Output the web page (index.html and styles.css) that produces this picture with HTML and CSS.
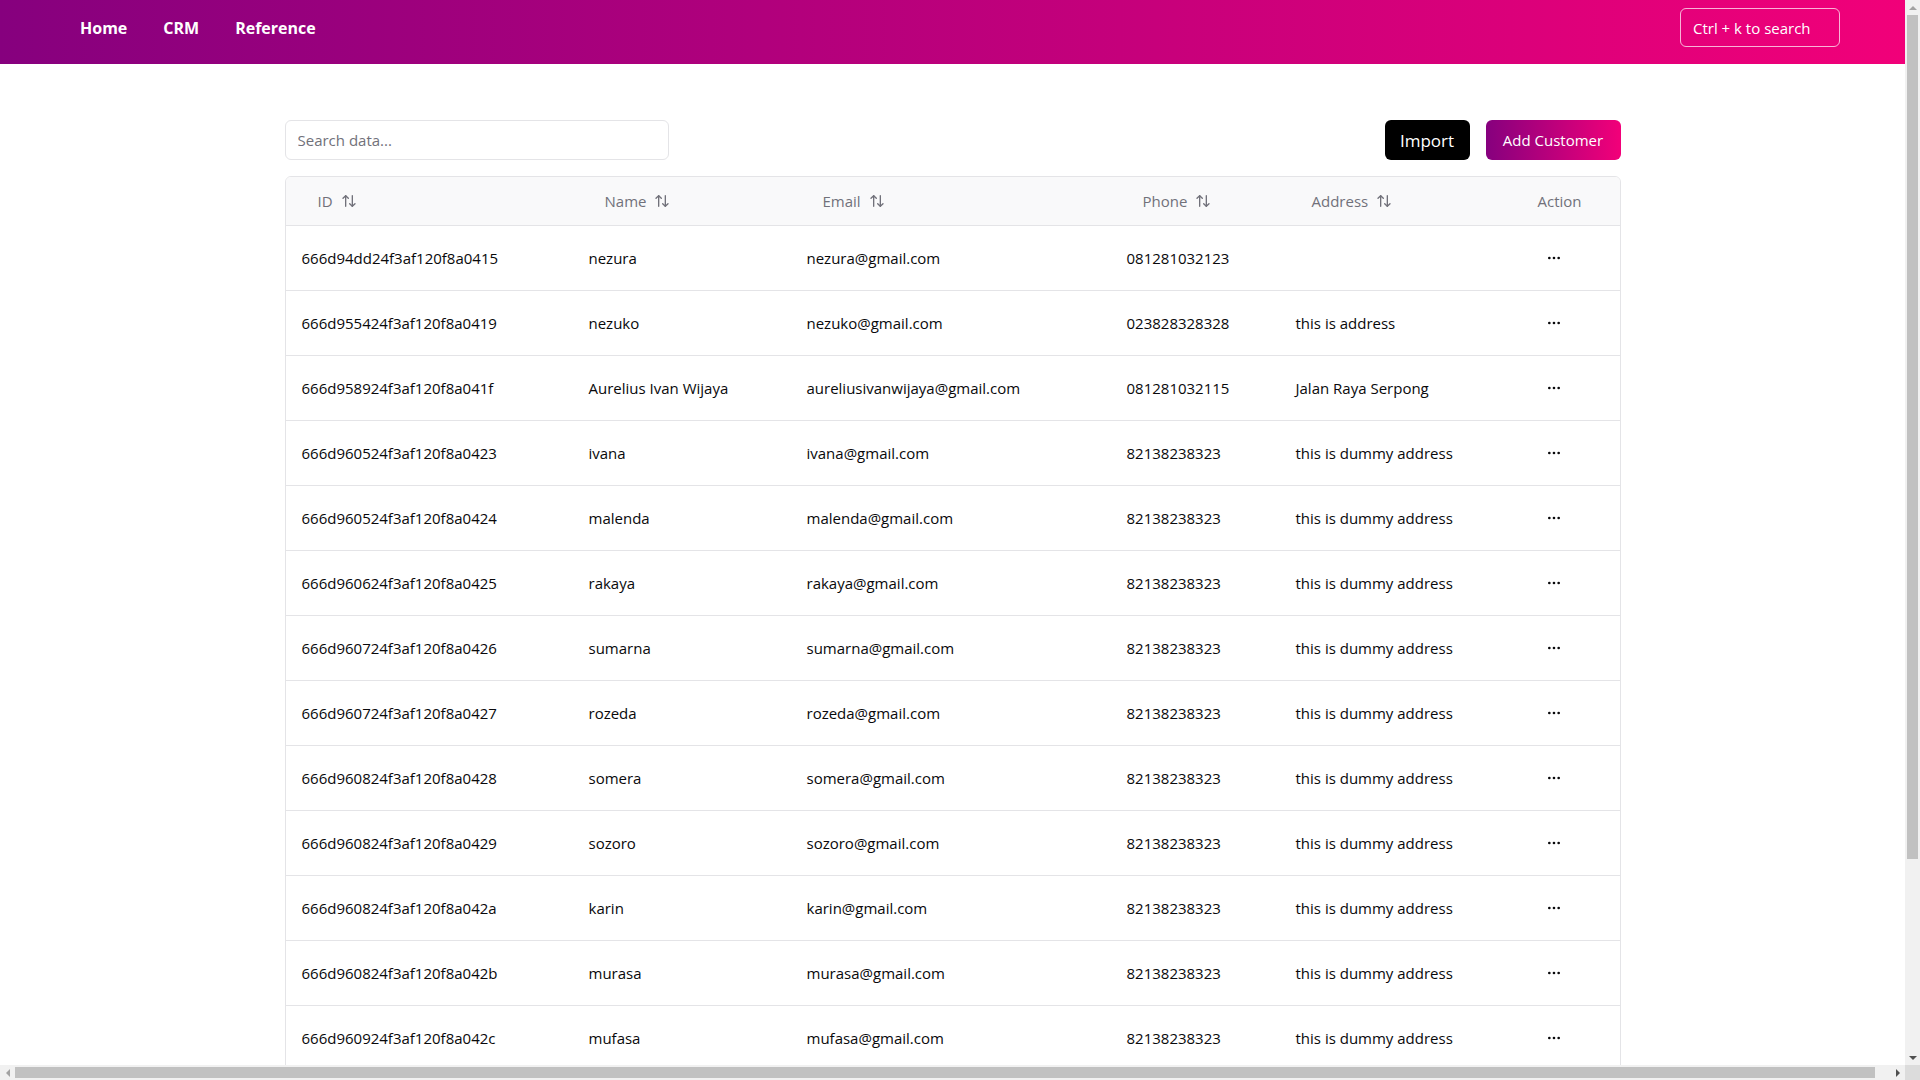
FILE: index.html
```html
<!DOCTYPE html>
<html lang="en">
<head>
<meta charset="utf-8">
<title>Customers</title>
<link rel="stylesheet" href="styles.css">
</head>
<body>
<div class="frame">
<div class="page">
<header class="topbar">
  <nav class="nav">
    <a class="nav-link" href="#">Home</a>
    <a class="nav-link" href="#">CRM</a>
    <a class="nav-link" href="#">Reference</a>
  </nav>
  <button class="cmd-search">Ctrl + k to search</button>
</header>
<main class="main">
  <div class="toolbar">
    <input class="search-input" type="text" placeholder="Search data...">
    <div class="actions">
      <button class="btn btn-dark">Import</button>
      <button class="btn btn-grad">Add Customer</button>
    </div>
  </div>
  <div class="table-wrap">
    <table class="table">
      <colgroup>
        <col class="c-id"><col class="c-name"><col class="c-email"><col class="c-phone"><col class="c-addr"><col class="c-act">
      </colgroup>
      <thead>
        <tr>
          <th><span class="sort-btn">ID <svg class="sort-ico" viewBox="0 0 24 24"><path d="m21 16-4 4-4-4"/><path d="M17 20V4"/><path d="m3 8 4-4 4 4"/><path d="M7 4v16"/></svg></span></th>
          <th><span class="sort-btn">Name <svg class="sort-ico" viewBox="0 0 24 24"><path d="m21 16-4 4-4-4"/><path d="M17 20V4"/><path d="m3 8 4-4 4 4"/><path d="M7 4v16"/></svg></span></th>
          <th><span class="sort-btn">Email <svg class="sort-ico" viewBox="0 0 24 24"><path d="m21 16-4 4-4-4"/><path d="M17 20V4"/><path d="m3 8 4-4 4 4"/><path d="M7 4v16"/></svg></span></th>
          <th><span class="sort-btn">Phone <svg class="sort-ico" viewBox="0 0 24 24"><path d="m21 16-4 4-4-4"/><path d="M17 20V4"/><path d="m3 8 4-4 4 4"/><path d="M7 4v16"/></svg></span></th>
          <th><span class="sort-btn">Address <svg class="sort-ico" viewBox="0 0 24 24"><path d="m21 16-4 4-4-4"/><path d="M17 20V4"/><path d="m3 8 4-4 4 4"/><path d="M7 4v16"/></svg></span></th>
          <th class="th-plain">Action</th>
        </tr>
      </thead>
      <tbody>
        <tr><td>666d94dd24f3af120f8a0415</td><td>nezura</td><td>nezura@gmail.com</td><td>081281032123</td><td></td><td><span class="dots"><svg viewBox="0 0 24 24"><circle cx="12" cy="12" r="1"/><circle cx="19" cy="12" r="1"/><circle cx="5" cy="12" r="1"/></svg></span></td></tr>
        <tr><td>666d955424f3af120f8a0419</td><td>nezuko</td><td>nezuko@gmail.com</td><td>023828328328</td><td>this is address</td><td><span class="dots"><svg viewBox="0 0 24 24"><circle cx="12" cy="12" r="1"/><circle cx="19" cy="12" r="1"/><circle cx="5" cy="12" r="1"/></svg></span></td></tr>
        <tr><td>666d958924f3af120f8a041f</td><td>Aurelius Ivan Wijaya</td><td>aureliusivanwijaya@gmail.com</td><td>081281032115</td><td>Jalan Raya Serpong</td><td><span class="dots"><svg viewBox="0 0 24 24"><circle cx="12" cy="12" r="1"/><circle cx="19" cy="12" r="1"/><circle cx="5" cy="12" r="1"/></svg></span></td></tr>
        <tr><td>666d960524f3af120f8a0423</td><td>ivana</td><td>ivana@gmail.com</td><td>82138238323</td><td>this is dummy address</td><td><span class="dots"><svg viewBox="0 0 24 24"><circle cx="12" cy="12" r="1"/><circle cx="19" cy="12" r="1"/><circle cx="5" cy="12" r="1"/></svg></span></td></tr>
        <tr><td>666d960524f3af120f8a0424</td><td>malenda</td><td>malenda@gmail.com</td><td>82138238323</td><td>this is dummy address</td><td><span class="dots"><svg viewBox="0 0 24 24"><circle cx="12" cy="12" r="1"/><circle cx="19" cy="12" r="1"/><circle cx="5" cy="12" r="1"/></svg></span></td></tr>
        <tr><td>666d960624f3af120f8a0425</td><td>rakaya</td><td>rakaya@gmail.com</td><td>82138238323</td><td>this is dummy address</td><td><span class="dots"><svg viewBox="0 0 24 24"><circle cx="12" cy="12" r="1"/><circle cx="19" cy="12" r="1"/><circle cx="5" cy="12" r="1"/></svg></span></td></tr>
        <tr><td>666d960724f3af120f8a0426</td><td>sumarna</td><td>sumarna@gmail.com</td><td>82138238323</td><td>this is dummy address</td><td><span class="dots"><svg viewBox="0 0 24 24"><circle cx="12" cy="12" r="1"/><circle cx="19" cy="12" r="1"/><circle cx="5" cy="12" r="1"/></svg></span></td></tr>
        <tr><td>666d960724f3af120f8a0427</td><td>rozeda</td><td>rozeda@gmail.com</td><td>82138238323</td><td>this is dummy address</td><td><span class="dots"><svg viewBox="0 0 24 24"><circle cx="12" cy="12" r="1"/><circle cx="19" cy="12" r="1"/><circle cx="5" cy="12" r="1"/></svg></span></td></tr>
        <tr><td>666d960824f3af120f8a0428</td><td>somera</td><td>somera@gmail.com</td><td>82138238323</td><td>this is dummy address</td><td><span class="dots"><svg viewBox="0 0 24 24"><circle cx="12" cy="12" r="1"/><circle cx="19" cy="12" r="1"/><circle cx="5" cy="12" r="1"/></svg></span></td></tr>
        <tr><td>666d960824f3af120f8a0429</td><td>sozoro</td><td>sozoro@gmail.com</td><td>82138238323</td><td>this is dummy address</td><td><span class="dots"><svg viewBox="0 0 24 24"><circle cx="12" cy="12" r="1"/><circle cx="19" cy="12" r="1"/><circle cx="5" cy="12" r="1"/></svg></span></td></tr>
        <tr><td>666d960824f3af120f8a042a</td><td>karin</td><td>karin@gmail.com</td><td>82138238323</td><td>this is dummy address</td><td><span class="dots"><svg viewBox="0 0 24 24"><circle cx="12" cy="12" r="1"/><circle cx="19" cy="12" r="1"/><circle cx="5" cy="12" r="1"/></svg></span></td></tr>
        <tr><td>666d960824f3af120f8a042b</td><td>murasa</td><td>murasa@gmail.com</td><td>82138238323</td><td>this is dummy address</td><td><span class="dots"><svg viewBox="0 0 24 24"><circle cx="12" cy="12" r="1"/><circle cx="19" cy="12" r="1"/><circle cx="5" cy="12" r="1"/></svg></span></td></tr>
        <tr><td>666d960924f3af120f8a042c</td><td>mufasa</td><td>mufasa@gmail.com</td><td>82138238323</td><td>this is dummy address</td><td><span class="dots"><svg viewBox="0 0 24 24"><circle cx="12" cy="12" r="1"/><circle cx="19" cy="12" r="1"/><circle cx="5" cy="12" r="1"/></svg></span></td></tr>
      </tbody>
    </table>
  </div>
</main>
</div>
<div class="vscroll">
  <span class="arrow arrow-up dim"></span>
  <span class="vthumb"></span>
  <span class="arrow arrow-down"></span>
</div>
<div class="hscroll">
  <span class="arrow arrow-left dim"></span>
  <span class="hthumb"></span>
  <span class="arrow arrow-right"></span>
</div>
<div class="corner"></div>
</div>
</body>
</html>
```

FILE: styles.css
```css
* { box-sizing: border-box; }
html, body { margin: 0; padding: 0; overflow: hidden; }
body {
  font-family: "Open Sans", "Liberation Sans", sans-serif;
  color: #09090b;
  background: #ffffff;
}
.frame {
  display: grid;
  grid-template-columns: 1905px 15px;
  grid-template-rows: 1065px 15px;
  width: 1920px;
  height: 1080px;
}
.page {
  overflow: hidden;
  background: #ffffff;
}
.topbar {
  width: 1920px;
  height: 64px;
  padding: 8px 80px 0;
  display: flex;
  align-items: flex-start;
  justify-content: space-between;
  background: linear-gradient(90deg, #86007e 0%, #f20079 100%);
}
.nav { display: flex; align-items: center; gap: 36px; height: 39px; }
.nav-link {
  color: #ffffff;
  text-decoration: none;
  font-weight: 700;
  font-size: 16px;
}
.cmd-search {
  width: 160px;
  height: 39px;
  border: 1px solid rgba(255,255,255,0.7);
  border-radius: 6px;
  background: transparent;
  color: #ffffff;
  font-family: inherit;
  font-size: 15px;
  text-align: left;
  padding: 0 12px;
}
.main {
  width: 1336px;
  margin: 0 auto;
  padding: 56px 0 40px;
}
.toolbar {
  display: flex;
  justify-content: space-between;
  align-items: center;
  margin-bottom: 16px;
}
.search-input {
  width: 384px;
  height: 40px;
  border: 1px solid #e4e4e7;
  border-radius: 6px;
  padding: 0 12px;
  font-family: inherit;
  font-size: 15px;
  color: #09090b;
  outline: none;
}
.search-input::placeholder { color: #71717a; }
.actions { display: flex; gap: 16px; }
.btn {
  height: 40px;
  border: none;
  border-radius: 6px;
  color: #ffffff;
  font-family: inherit;
  cursor: pointer;
}
.btn-dark { background: #000000; width: 85px; font-size: 17px; }
.btn-grad {
  width: 135px;
  font-size: 15px;
  font-weight: 500;
  background: linear-gradient(90deg, #86007e 0%, #f20079 100%);
}
.table-wrap {
  border: 1px solid #e4e4e7;
  border-radius: 6px;
  overflow: hidden;
}
.table {
  width: 100%;
  border-collapse: collapse;
  table-layout: fixed;
  font-size: 15px;
}
.c-id { width: 287px; }
.c-name { width: 218px; }
.c-email { width: 320px; }
.c-phone { width: 169px; }
.c-addr { width: 242px; }
.c-act { width: 98px; }
thead tr { background: #f9f9fa; }
th {
  height: 48px;
  padding: 0 16px;
  text-align: left;
  font-weight: 500;
  color: #71717a;
  border-bottom: 1px solid #e4e4e7;
}
.sort-btn {
  display: inline-flex;
  align-items: center;
  gap: 8px;
  padding: 0 16px;
}
.th-plain { padding-left: 16px; }
.sort-ico {
  width: 16px;
  height: 16px;
  fill: none;
  stroke: currentColor;
  stroke-width: 2;
  stroke-linecap: round;
  stroke-linejoin: round;
}
td {
  height: 65px;
  padding: 0 16px;
  border-bottom: 1px solid #e4e4e7;
  white-space: nowrap;
}
.dots {
  display: inline-flex;
  width: 32px;
  height: 32px;
  align-items: center;
  justify-content: center;
  vertical-align: middle;
}
.dots svg {
  width: 16px;
  height: 16px;
  fill: none;
  stroke: #09090b;
  stroke-width: 2;
}

/* drawn scrollbars */
.vscroll, .hscroll { background: #f1f1f1; display: flex; align-items: center; }
.vscroll { flex-direction: column; }
.vthumb {
  width: 11px;
  height: 844px;
  flex: none;
  background: #c1c1c1;
}
.vscroll .arrow-down { margin-top: auto; }
.hthumb {
  height: 11px;
  width: 1860px;
  flex: none;
  background: #c1c1c1;
}
.hscroll .arrow-right { margin-left: auto; }
.corner { background: #dcdcdc; }
.arrow {
  width: 15px;
  height: 15px;
  flex: none;
  display: flex;
  align-items: center;
  justify-content: center;
}
.arrow::before { content: ""; width: 0; height: 0; border-style: solid; }
.arrow-up::before { border-width: 0 4px 4px 4px; border-color: transparent transparent #505050 transparent; }
.arrow-down::before { border-width: 4px 4px 0 4px; border-color: #505050 transparent transparent transparent; }
.arrow-left::before { border-width: 4px 4px 4px 0; border-color: transparent #505050 transparent transparent; }
.arrow-right::before { border-width: 4px 0 4px 4px; border-color: transparent transparent transparent #505050; }
.arrow.dim.arrow-up::before { border-bottom-color: #a3a3a3; }
.arrow.dim.arrow-left::before { border-right-color: #a3a3a3; }
```
